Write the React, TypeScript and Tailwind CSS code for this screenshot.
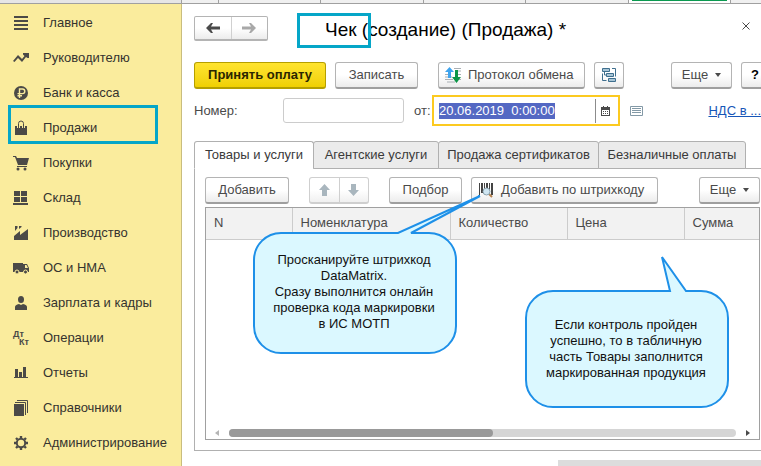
import React from "react";

const menuIcons: Record<string, React.ReactNode> = {
  main: <path d="M1 1h14v2H1zM1 5h14v2H1zM1 9h14v2H1zM1 13h14v2H1z" />,
  chart: <path d="M0 11 5 5l4 4 2.500-3-1.500-1.500V3h6v5h-1.500L13 7l-4 5-4-4-3.500 4z" />,
  ruble: (
    <>
      <circle cx="8" cy="8" r="7" />
      <path d="M6.500 13V4h3a2.300 2.300 0 0 1 0 4.600H4.500M4.500 10.800H9" fill="none" stroke="#faec9d" strokeWidth="1.400" />
    </>
  ),
  bag: (
    <>
      <path d="M2 6h12v9H2z" />
      <path d="M5.500 8V3.500a2.500 2.500 0 0 1 5 0V8" fill="none" stroke="#faec9d" strokeWidth="3" />
      <path d="M5.500 8V3.500a2.500 2.500 0 0 1 5 0V8" fill="none" stroke="#4b4a47" />
    </>
  ),
  cart: (
    <>
      <path d="M0 1h3l1 2h12l-2 7H5L2 2H0z" />
      <path d="M4 11h10v1H4z" />
      <circle cx="5" cy="14" r="1.500" />
      <circle cx="12" cy="14" r="1.500" />
    </>
  ),
  stock: <path d="M1 1h6v5H1zM8 1h6v5H8zM1 7h6v5H1zM8 7h6v5H8zM0 13h15v2H0z" />,
  factory: <path d="M1 15V11l6-5v4l8-6v11zM2 1h2.500v2L2 6zM6 1h2.500v1L6 4z" />,
  truck: (
    <>
      <path d="M0 3h10v9H0zM10 4h4l2 4v4h-6z" />
      <path d="M12 5h1.500L15 8h-3z" fill="#faec9d" />
      <circle cx="4" cy="12" r="2" stroke="#faec9d" />
      <circle cx="12.500" cy="12" r="2" stroke="#faec9d" />
    </>
  ),
  person: (
    <>
      <ellipse cx="8" cy="4.500" rx="3" ry="3.500" />
      <path d="M2 15v-3q0-2 4-3l2 1 2-1q4 1 4 3v3z" />
    </>
  ),
  reports: <path d="M2 4h3v8H2zM6 7h3v5H6zM10 2h3v10h-3zM1 12h14v1H1z" />,
  books: (
    <>
      <path d="M1 4h10v12H1z" />
      <path d="M2 2.500h10.500V15M4 .500h10.500V13" fill="none" stroke="#4b4a47" />
    </>
  ),
  gear: (
    <>
      <circle cx="8" cy="8" r="4.200" fill="none" stroke="#4b4a47" strokeWidth="2" />
      <path d="M8 1v2M8 13v2M1 8h2M13 8h2M3 3l1.500 1.500M11.500 11.500 13 13M3 13l1.500-1.500M11.500 4.500 13 3" stroke="#4b4a47" strokeWidth="2.400" />
    </>
  ),
};

const menu = [
  ["main", "Главное"],
  ["chart", "Руководителю"],
  ["ruble", "Банк и касса"],
  ["bag", "Продажи"],
  ["cart", "Покупки"],
  ["stock", "Склад"],
  ["factory", "Производство"],
  ["truck", "ОС и НМА"],
  ["person", "Зарплата и кадры"],
  ["ops", "Операции"],
  ["reports", "Отчеты"],
  ["books", "Справочники"],
  ["gear", "Администрирование"],
];

function Button({ className = "justify-center", children, label }: { className?: string; children: React.ReactNode; label?: string }) {
  return (
    <button
      type="button"
      aria-label={label}
      className={`flex h-[27px] shrink-0 items-center rounded-[3px] border border-b-2 border-[#b4b4b4] border-b-[#9f9f9f] bg-linear-to-b from-white from-50% to-[#ececec] text-[#4a4a4a] ${className}`}
    >
      {children}
    </button>
  );
}

function Caret() {
  return (
    <svg width="6" height="4" viewBox="0 0 6 4" aria-hidden="true">
      <path d="M0 0h6L3 4z" fill="#4a4a4a" />
    </svg>
  );
}

function Sidebar() {
  return (
    <nav className="w-[182px] shrink-0 border-r border-[#c9bd7e] bg-[#faec9d] pt-px">
      <ul>
        {menu.map(([icon, title]) => (
          <li key={icon} className="relative">
            <a href="#" className="flex h-[35px] items-center gap-[14px] pl-[13px] text-[#35332f]">
              {icon === "ops" ? (
                <span aria-hidden="true" className="flex w-4 flex-col text-[9px] leading-[8px] font-bold text-[#4b4a47]">
                  <span>Дт</span>
                  <span className="self-end">Кт</span>
                </span>
              ) : (
                <svg width="16" height="16" viewBox="0 0 16 16" fill="#4b4a47" aria-hidden="true">
                  {menuIcons[icon]}
                </svg>
              )}
              {title}
            </a>
            {icon === "bag" && (
              <span className="pointer-events-none absolute -top-[5px] left-2 h-[39px] w-[150px] border-3 border-[#05a6c8]" />
            )}
          </li>
        ))}
      </ul>
    </nav>
  );
}

function WindowTabs() {
  return (
    <div className="flex h-1 shrink-0 border-b border-[#a0a0a0] bg-[#f0f0f0]">
      <div className="w-[182px] shrink-0 border-r border-[#a0a0a0] bg-[#e6e6e6]" />
      <div className="w-[37px] shrink-0 border-r border-[#a0a0a0]" />
      <div className="flex-1 border-r border-[#a0a0a0]" />
      <div className="flex-1 border-r border-[#a0a0a0]" />
      <div className="flex-1 border-r border-[#a0a0a0]" />
      <div className="flex-1 border-r border-[#a0a0a0]" />
      <div className="flex-1 border-r border-[#a0a0a0] bg-white">
        <div className="mx-[3px] h-px bg-[#0a9a50]" />
      </div>
      <div className="w-[30px] shrink-0" />
    </div>
  );
}

function Header() {
  return (
    <header className="flex h-[50px] items-start pt-3">
      <div className="flex h-[25px] w-[74px] divide-x divide-[#d0d0d0] rounded-[2px] border border-b-2 border-[#b4b4b4] bg-linear-to-b from-white from-50% to-[#ececec]">
        <button type="button" aria-label="Назад" className="flex flex-1 items-center justify-center">
          <svg width="14" height="10" viewBox="0 0 14 10" fill="#4a4a4a">
            <path d="M0 5 5 0h2L5 3.500h9v3H5L7 10H5z" />
          </svg>
        </button>
        <button type="button" aria-label="Вперед" className="flex flex-1 items-center justify-center">
          <svg width="14" height="10" viewBox="0 0 14 10" fill="#a8a8a8">
            <path d="M14 5 9 0H7l2 3.500H0v3h9L7 10h2z" />
          </svg>
        </button>
      </div>
      <div className="relative ml-[29px]">
        <h1 className="pt-[2px] pl-7 text-[19px] leading-6 text-black">Чек (создание) (Продажа) *</h1>
        <span className="pointer-events-none absolute -top-[3px] left-0 h-[35px] w-[74px] border-3 border-[#05a6c8]" />
      </div>
      <button type="button" aria-label="Закрыть" className="mt-[6px] mr-[11px] ml-auto">
        <svg width="8" height="8" viewBox="0 0 8 8" stroke="#4a4a4a" fill="none">
          <path d="m.500.500 7 7M7.500.500l-7 7" />
        </svg>
      </button>
    </header>
  );
}

function Toolbar() {
  return (
    <div className="-mr-2 flex pt-2">
      <button
        type="button"
        className="h-[27px] w-[132px] shrink-0 rounded-[3px] border border-b-2 border-[#b59f00] bg-linear-to-b from-[#ffe42e] to-[#f0d000] font-bold text-[#2b2600]"
      >
        Принять оплату
      </button>
      <Button className="ml-[9px] w-[83px] justify-center">Записать</Button>
      <Button className="ml-5 w-[147px] gap-[7px] pl-[6px]">
        <svg width="16" height="16" viewBox="0 0 16 16" aria-hidden="true">
          <path d="M9 1.500h7M10 4h6M0 7.500h3M12 7.500h4M0 10h7M0 12.500h8M14 12.500h2M2 15h8" stroke="#a9b0b5" />
          <path d="M4.500 0 9 5H6v6H3V5H0z" fill="#3fa4ee" />
          <path d="M10 3h3v7h3l-4.500 6L7 10h3z" fill="#0b9547" />
        </svg>
        Протокол обмена
      </Button>
      <Button className="ml-[9px] w-[30px] justify-center" label="Структура подчиненности">
        <svg width="16" height="16" viewBox="0 0 16 16" fill="#a8c5d6" stroke="#3f6f8e" aria-hidden="true">
          <path d="M1.500 1.500h7v3h-7zM5.500 6.500h7v3h-7zM7.500 11.500h7v3h-7z" />
          <path d="M11 1.500h3.500v8M1.500 6.500v7h4M3.500 5v3h2" fill="none" />
        </svg>
      </Button>
      <Button className="ml-auto w-[61px] justify-center gap-[7px]">
        Еще
        <Caret />
      </Button>
      <Button className="ml-[9px] w-7 justify-center font-bold text-black" label="Справка">
        ?
      </Button>
    </div>
  );
}

function DocumentFields() {
  return (
    <div className="flex h-[43px] items-center text-[#4a4a4a]">
      <label htmlFor="number" className="w-[89px] shrink-0">
        Номер:
      </label>
      <input id="number" className="h-[25px] w-[121px] shrink-0 rounded-[3px] border border-[#cccccc] px-2" />
      <label htmlFor="date" className="ml-[10px] w-[18px] shrink-0">
        от:
      </label>
      <div className="flex h-[31px] w-[188px] shrink-0 items-center border-2 border-[#fcca20] pl-[5px]">
        <input id="date" defaultValue="20.06.2019  0:00:00" className="h-4 w-[116px] bg-[#5468c3] leading-4 whitespace-pre text-white outline-none" />
        <span className="ml-auto h-6 w-px bg-[#8c8c8c]" />
        <button type="button" aria-label="Календарь" className="pr-2 pl-[5px]">
          <svg width="9" height="10" viewBox="0 0 9 10">
            <path d="M0 1h9v9H0z" fill="#4a4a4a" />
            <path d="M1 4h7v5H1z" fill="#fff" />
            <path d="M2 5.500h5M2 7.500h5" stroke="#4a4a4a" strokeDasharray="1 1" />
            <path d="M2 0h1v2H2zM6 0h1v2H6z" fill="#4a4a4a" />
          </svg>
        </button>
      </div>
      <button type="button" aria-label="Список" className="ml-[10px] shrink-0">
        <svg width="13" height="10" viewBox="0 0 13 10" fill="none" stroke="#8399a6">
          <path d="M.500.500h12v9H.500zM2 2.500h9M2 4.500h9M2 6.500h9" />
        </svg>
      </button>
      <a href="#" className="ml-auto shrink-0 text-[#1756b8] underline">
        НДС в ...
      </a>
    </div>
  );
}

const tabs = [
  ["Товары и услуги", "w-[120px]"],
  ["Агентские услуги", "w-[126px]"],
  ["Продажа сертификатов", "w-[161px]"],
  ["Безналичные оплаты", "w-[148px]"],
];

function Tabs() {
  return (
    <div role="tablist" className="mt-[9px] flex border-b border-[#b0b0b0]">
      {tabs.map(([title, width], i) => (
        <button
          key={title}
          role="tab"
          type="button"
          aria-selected={i === 0}
          className={`-mb-px h-7 shrink-0 rounded-t-[3px] border border-[#b0b0b0] text-[#3a3a3a] ${width} ${
            i === 0 ? "border-b-white bg-white" : "-ml-px bg-[#ebebeb]"
          }`}
        >
          {title}
        </button>
      ))}
    </div>
  );
}

function TableToolbar() {
  return (
    <div className="flex">
      <Button className="w-[84px] justify-center">Добавить</Button>
      <div className="ml-5 flex h-[27px] w-[60px] shrink-0 divide-x divide-[#cfcfcf] rounded-[3px] border border-b-2 border-[#cfcfcf] bg-linear-to-b from-white from-50% to-[#f0f0f0]">
        <button type="button" aria-label="Вверх" className="flex flex-1 items-center justify-center">
          <svg width="11" height="12" viewBox="0 0 11 12" fill="#a9b6be">
            <path d="M5.500 0 11 6H8v6H3V6H0z" />
          </svg>
        </button>
        <button type="button" aria-label="Вниз" className="flex flex-1 items-center justify-center">
          <svg width="11" height="12" viewBox="0 0 11 12" fill="#a9b6be">
            <path d="M5.500 12 11 6H8V0H3v6H0z" />
          </svg>
        </button>
      </div>
      <Button className="ml-5 w-[73px] justify-center">Подбор</Button>
      <Button className="ml-[9px] w-[187px] gap-[7px] pl-[6px]">
        <svg width="16" height="16" viewBox="0 0 16 16" aria-hidden="true">
          <path d="M1 1h1v12H1zM3 1h2v10H3zM6 1h1v8H6zM8 1h2v8H8zM11 1h1v8h-1zM13 1h2v12h-2z" fill="#444" />
          <path d="m11 12 3 3" stroke="#b5814f" strokeWidth="2" />
          <circle cx="8.500" cy="9.500" r="3.500" fill="#cfe6f2" stroke="#8aa2ae" />
        </svg>
        Добавить по штрихкоду
      </Button>
      <Button className="ml-auto w-[61px] justify-center gap-[7px]">
        Еще
        <Caret />
      </Button>
    </div>
  );
}

function GoodsTable() {
  return (
    <div className="mt-[3px] flex flex-1 flex-col justify-between border border-[#a0a0a0]">
      <table className="w-full table-fixed border-collapse text-left text-[#4a4a4a]">
        <thead>
          <tr className="h-[31px] border-b border-[#cccccc] bg-[#f2f2f2]">
            <th className="w-[86px] border-r border-[#cccccc] pl-2 font-normal">N</th>
            <th className="w-[158px] border-r border-[#cccccc] pl-2 font-normal">Номенклатура</th>
            <th className="w-[117px] border-r border-[#cccccc] pl-2 font-normal">Количество</th>
            <th className="w-[117px] border-r border-[#cccccc] pl-2 font-normal">Цена</th>
            <th className="pl-2 font-normal">Сумма</th>
          </tr>
        </thead>
      </table>
      <div className="flex items-center px-[9px] pb-[2px]">
        <svg width="4" height="6" viewBox="0 0 4 6" fill="#b5b5b5" aria-hidden="true">
          <path d="M4 0v6L0 3z" />
        </svg>
        <div className="mx-[10px] h-2 flex-1 rounded-full bg-[#d5d5d5]">
          <div className="h-2 w-[52%] rounded-full bg-[#999999]" />
        </div>
        <svg width="4" height="6" viewBox="0 0 4 6" fill="#4a4a4a" aria-hidden="true">
          <path d="M0 0v6l4-3z" />
        </svg>
      </div>
    </div>
  );
}

function Callouts() {
  return (
    <>
      <div className="absolute top-[195px] left-[252px] h-[160px] w-[230px]">
        <svg className="absolute inset-0" width="230" height="160" viewBox="0 0 230 160" aria-hidden="true">
          <path
            d="M29 38H146L228 1 159 38H177a27 27 0 0 1 27 27v66a27 27 0 0 1-27 27H29a27 27 0 0 1-27-27V65a27 27 0 0 1 27-27z"
            fill="#dbf8ff"
            stroke="#1e90e8"
            strokeWidth="2"
          />
        </svg>
        <p className="relative w-[204px] pt-[57px] text-center leading-4 text-[#111111]">
          Просканируйте штрихкод
          <br />
          DataMatrix.
          <br />
          Сразу выполнится онлайн
          <br />
          проверка кода маркировки
          <br />в ИС МОТП
        </p>
      </div>
      <div className="absolute top-[254px] left-[524px] h-[154px] w-[206px]">
        <svg className="absolute inset-0" width="206" height="154" viewBox="0 0 206 154" aria-hidden="true">
          <path
            d="M29 37H146L138 3 162 37H177a27 27 0 0 1 27 27v62a27 27 0 0 1-27 27H29a27 27 0 0 1-27-27V64a27 27 0 0 1 27-27z"
            fill="#dbf8ff"
            stroke="#1e90e8"
            strokeWidth="2"
          />
        </svg>
        <p className="relative w-[204px] pt-[63px] text-center leading-4 text-[#111111]">
          Если контроль пройден
          <br />
          успешно, то в табличную
          <br />
          часть Товары заполнится
          <br />
          маркированная продукция
        </p>
      </div>
    </>
  );
}

export default function App() {
  return (
    <div className="relative flex h-screen min-h-[466px] flex-col overflow-hidden bg-white font-['Liberation_Sans',Arial,sans-serif] text-[13px] leading-4">
      <WindowTabs />
      <div className="flex min-h-0 flex-1">
        <Sidebar />
        <main className="flex min-w-0 flex-1 flex-col overflow-hidden pl-3">
          <Header />
          <Toolbar />
          <DocumentFields />
          <Tabs />
          <section className="flex flex-1 flex-col border-b border-l border-[#b0b0b0] pt-2 pr-px pb-[10px] pl-[10px]">
            <TableToolbar />
            <GoodsTable />
          </section>
          <div className="mt-[9px] ml-auto h-[6px] w-[203px] shrink-0 bg-[#dcdcdc]" />
        </main>
      </div>
      <Callouts />
    </div>
  );
}
